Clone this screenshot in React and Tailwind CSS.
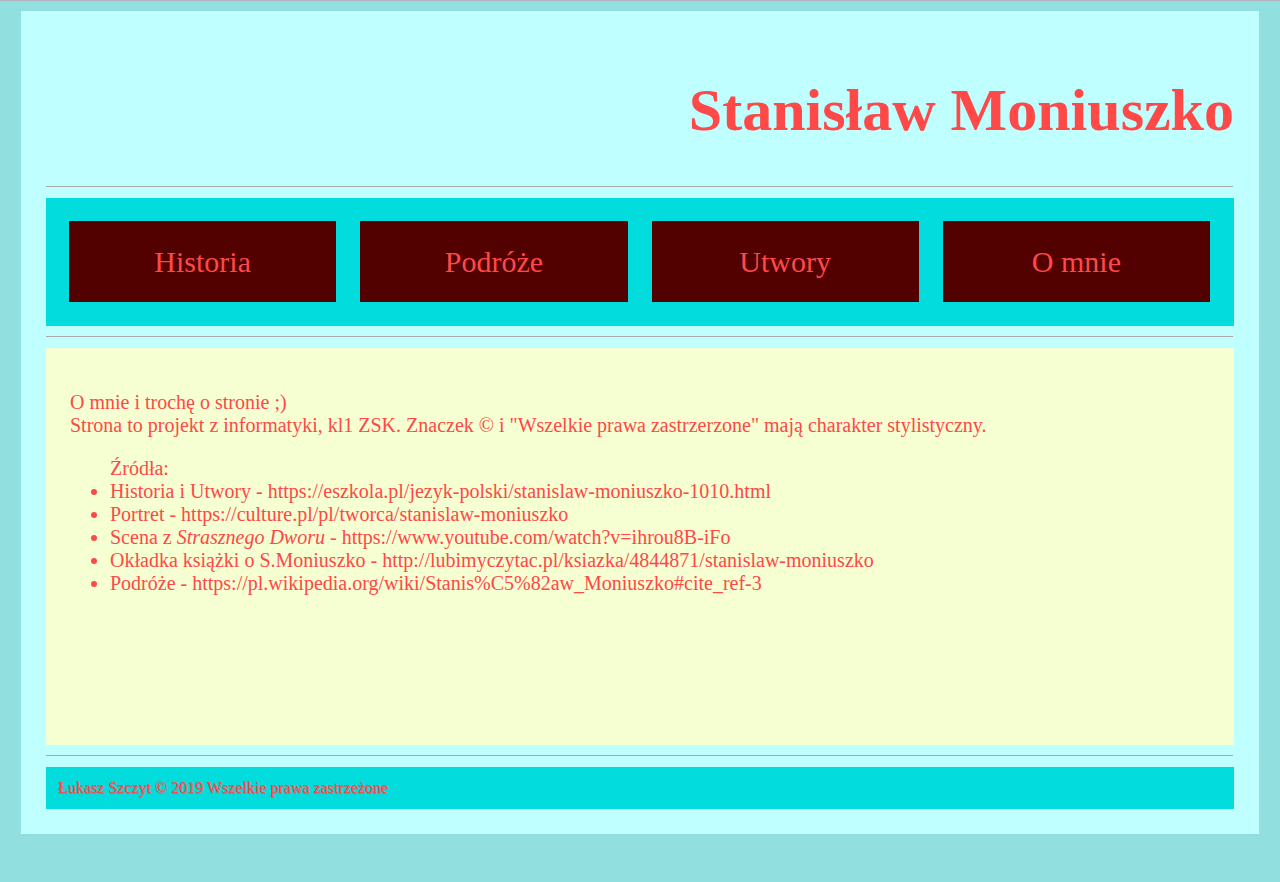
const navItems = ['Historia', 'Podróże', 'Utwory', 'O mnie']

const sources = [
  <>Historia i Utwory - https://eszkola.pl/jezyk-polski/stanislaw-moniuszko-1010.html</>,
  <>Portret - https://culture.pl/pl/tworca/stanislaw-moniuszko</>,
  <>Scena z <i>Strasznego Dworu</i> - https://www.youtube.com/watch?v=ihrou8B-iFo</>,
  <>Okładka książki o S.Moniuszko - http://lubimyczytac.pl/ksiazka/4844871/stanislaw-moniuszko</>,
  <>Podróże - https://pl.wikipedia.org/wiki/Stanis%C5%82aw_Moniuszko#cite_ref-3</>,
]

function Rule() {
  return <div className="h-px bg-[#a9a9a9] mr-px" />
}

export default function App() {
  return (
    <div
      className="min-h-[882px] bg-[#92dfe0] border-t border-[#b0b4c0] pt-[10px] px-[21px] pb-12 text-[#ff4848]"
      style={{ fontFamily: '"Liberation Serif", "Times New Roman", serif' }}
    >
      <div className="bg-[#c0ffff] p-[25px]">
        <header className="h-[150px] pt-[44px]">
          <h1 className="text-[60px] font-bold leading-none text-right">Stanisław Moniuszko</h1>
        </header>

        <Rule />

        <nav className="mt-[11px] bg-[#03dcdc] pt-[23px] pb-6 pl-[23px] pr-[24px] grid grid-cols-4 gap-6">
          {navItems.map((item) => (
            <div key={item} className="h-[81px] bg-[#520000] flex items-center justify-center text-[30px]">
              {item}
            </div>
          ))}
        </nav>

        <div className="mt-[10px]" />
        <Rule />

        <main className="mt-[11px] bg-[#f5ffd2] h-[397px] px-6 pt-[43px] text-[20px] leading-[23px]">
          <p>O mnie i trochę o stronie ;)</p>
          <p>Strona to projekt z informatyki, kl1 ZSK. Znaczek © i "Wszelkie prawa zastrzerzone" mają charakter stylistyczny.</p>
          <ul className="mt-5 pl-10">
            <li>Źródła:</li>
            {sources.map((s, i) => (
              <li key={i} className="list-disc">{s}</li>
            ))}
          </ul>
        </main>

        <div className="mt-[10px]" />
        <Rule />

        <footer className="mt-[11px] bg-[#03dcdc] h-[42px] flex items-center px-3 text-[16px] [text-shadow:1px_1px_0_#a08080]">
          Łukasz Szczyt © 2019 Wszelkie prawa zastrzeżone
        </footer>
      </div>
    </div>
  )
}
